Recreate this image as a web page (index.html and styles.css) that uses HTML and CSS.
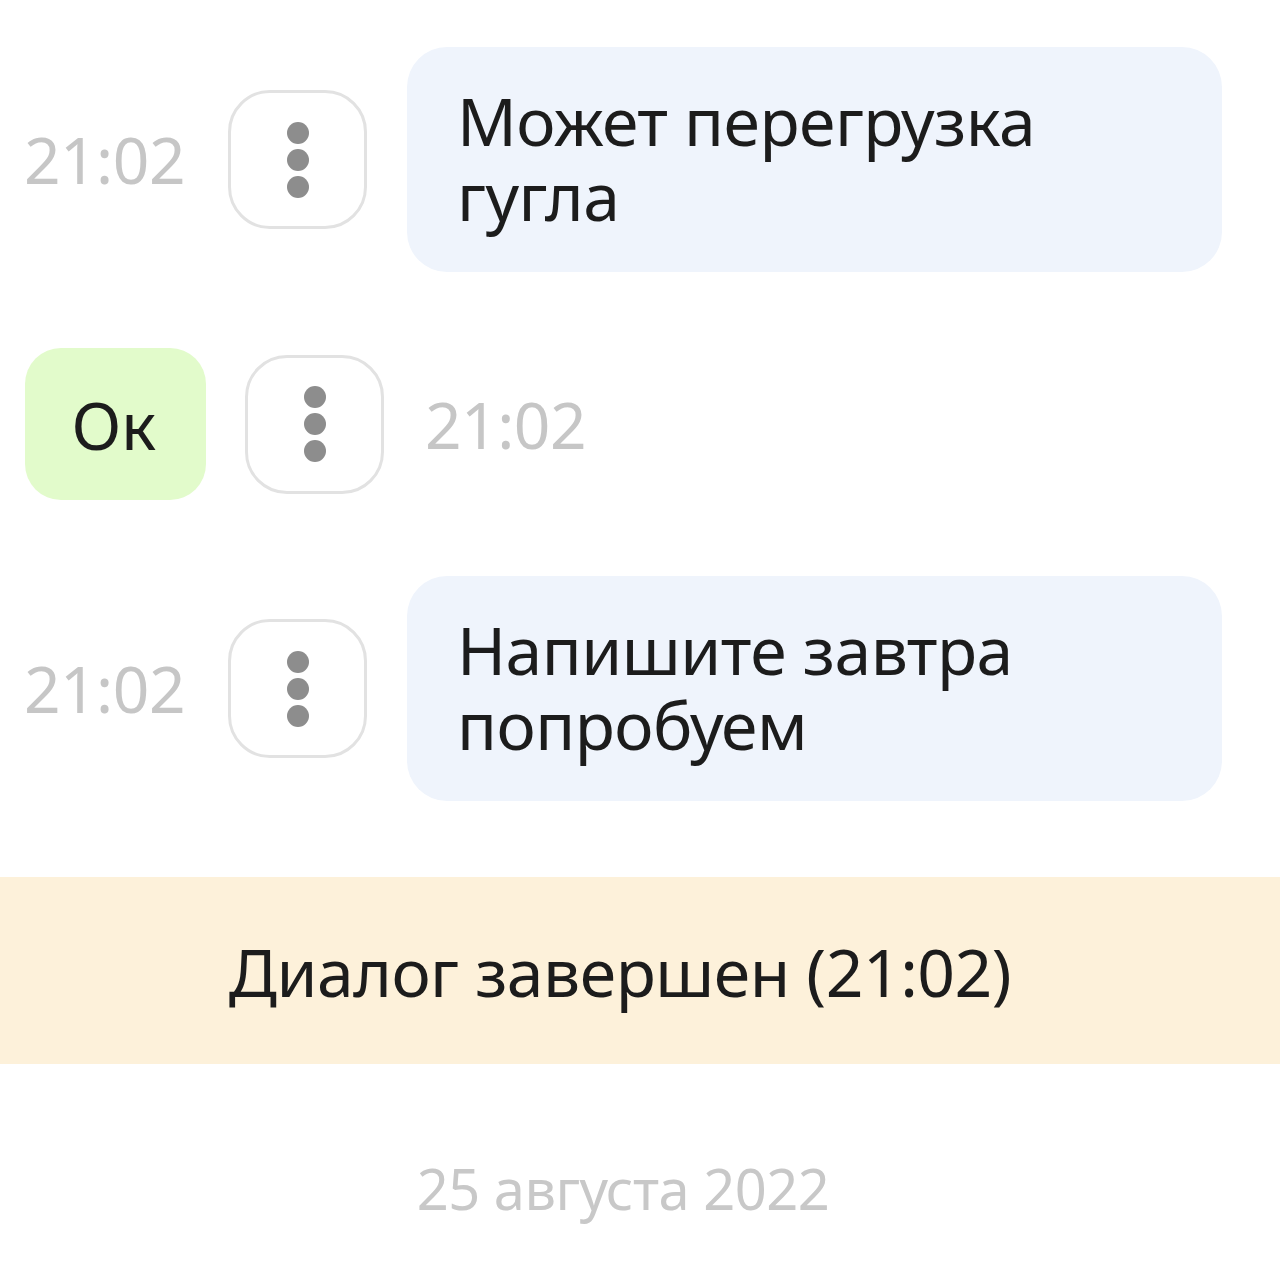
FILE: index.html
```html
<!DOCTYPE html>
<html lang="ru">

<head>
    <meta charset="UTF-8">
    <meta name="viewport" content="width=device-width, initial-scale=1.0">
    <title>Диалог</title>
    <link rel="stylesheet" href="styles.css">
</head>

<body>
    <div class="chat">
        <div class="row incoming">
            <span class="time">21:02</span>
            <div class="menu-btn"><span></span><span></span><span></span></div>
            <div class="bubble">Может перегрузка гугла</div>
        </div>

        <div class="row outgoing">
            <div class="bubble green">Ок</div>
            <div class="menu-btn"><span></span><span></span><span></span></div>
            <span class="time">21:02</span>
        </div>

        <div class="row incoming">
            <span class="time">21:02</span>
            <div class="menu-btn"><span></span><span></span><span></span></div>
            <div class="bubble">Напишите завтра попробуем</div>
        </div>
    </div>

    <div class="closed">
        <p>Диалог завершен (21:02)</p>
    </div>

    <div class="date">25 августа 2022</div>
</body>

</html>
```

FILE: styles.css
```css
/* Base */
* {
    padding: 0;
    margin: 0;
    box-sizing: border-box;
}

body {
    font-family: "Noto Sans", "Open Sans", sans-serif;
    background: #ffffff;
    color: #1c1c1c;
    width: 1280px;
    letter-spacing: -0.5px;
}

/* Chat rows */
.chat {
    display: flex;
    flex-direction: column;
    gap: 76px;
    padding-top: 47px;
}

.row {
    display: flex;
    align-items: center;
}

.incoming {
    justify-content: flex-end;
    padding-right: 58px;
}

.incoming .menu-btn {
    margin: 0 40px 0 43px;
}

.outgoing {
    padding-left: 25px;
}

.outgoing .menu-btn {
    margin: 0 41px 0 39px;
}

.time {
    font-size: 64px;
    color: #c6c6c6;
}

.bubble {
    width: 815px;
    min-height: 225px;
    padding: 36px 50px 30px;
    background: #eff4fc;
    border-radius: 40px;
    font-size: 66px;
    line-height: 75px;
}

.bubble.green {
    width: 181px;
    min-height: 152px;
    padding: 0 4px 0 0;
    display: flex;
    align-items: center;
    justify-content: center;
    background: #e2fbcb;
    border-radius: 36px;
}

/* Three dots button */
.menu-btn {
    width: 139px;
    height: 139px;
    border: 3px solid #e2e2e2;
    border-radius: 42px;
    display: flex;
    flex-direction: column;
    align-items: center;
    justify-content: center;
    gap: 5px;
}

.menu-btn span {
    width: 22px;
    height: 22px;
    border-radius: 50%;
    background: #8d8d8d;
}

/* Dialog closed banner */
.closed {
    margin-top: 76px;
    height: 187px;
    background: #fdf1da;
    display: flex;
    align-items: center;
    justify-content: center;
    padding-right: 40px;
    font-size: 66px;
}

.date {
    margin-top: 86px;
    text-align: center;
    padding-right: 34px;
    font-size: 56px;
    color: #c8c8c8;
}
```
